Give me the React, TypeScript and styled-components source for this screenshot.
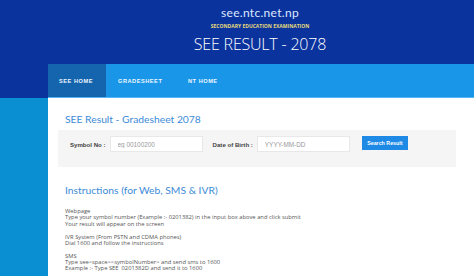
import React from "react";
import styled, { createGlobalStyle } from "styled-components";

const Global = createGlobalStyle`
  html, body { margin: 0; padding: 0; background: #ffffff; }
  body { font-family: "Open Sans", "Liberation Sans", sans-serif; overflow: hidden; }
  * { box-sizing: border-box; }
`;

const Page = styled.div`
  width: 474px;
  height: 276px;
  display: flex;
  flex-direction: column;
  overflow: hidden;
`;

const Header = styled.header`
  background: #0b339e;
  display: flex;
  flex-direction: column;
  align-items: center;
  padding-top: 5px;
`;

const Domain = styled.div`
  color: #dfe8ff;
  font-family: "Lato", "Open Sans", sans-serif;
  font-size: 12px;
  line-height: 15px;
  letter-spacing: 0.3px;
  margin-left: 46px;
`;

const Subtitle = styled.div`
  color: #e6dc7a;
  font-family: "Open Sans", sans-serif;
  font-weight: 700;
  font-size: 5px;
  line-height: 6px;
  margin-top: 3px;
  margin-left: 46px;
  white-space: nowrap;
`;

const Title = styled.h1`
  margin: 4px 0 0 46px;
  color: #ffffff;
  font-family: "Open Sans", sans-serif;
  font-weight: 300;
  font-size: 16px;
  line-height: 22px;
  letter-spacing: -0.2px;
  white-space: nowrap;
`;

const NavRow = styled.nav`
  align-self: stretch;
  margin-top: 9px;
  margin-left: 48px;
  height: 34px;
  background: #1a96e8;
  border-bottom: 1px solid #57b7f4;
  display: flex;
`;

const Tab = styled.a<{ $active?: boolean; $w?: number }>`
  display: flex;
  align-items: center;
  padding: 0 12px 0 ${(p) => (p.$active ? "11px" : "12px")};
  background: ${(p) => (p.$active ? "#1465ad" : "transparent")};
  color: #eef6ff;
  font-family: "Liberation Sans", Arial, sans-serif;
  font-weight: 700;
  font-size: 5.6px;
  letter-spacing: 0.55px;
  text-decoration: none;
  ${(p) => (p.$w ? `width: ${p.$w}px;` : "")}
`;

const Body = styled.div`
  flex: 1;
  display: flex;
`;

const Side = styled.aside`
  width: 48px;
  background: #0a8fd3;
`;

const Content = styled.main`
  flex: 1;
  background: #ffffff;
  padding: 14px 18px 0 10px;
`;

const Heading = styled.h2<{ $gap?: number }>`
  margin: ${(p) => p.$gap ?? 0}px 0 0 7px;
  color: #3d8bd8;
  font-family: "Lato", "Open Sans", sans-serif;
  font-weight: 400;
  font-size: 10.3px;
  line-height: 14px;
  letter-spacing: 0;
  white-space: nowrap;
`;

const FormPanel = styled.form`
  margin-top: 4px;
  height: 37px;
  background: #f5f5f5;
  display: flex;
  align-items: flex-start;
  padding: 6px 12px 0 12px;
`;

const Label = styled.label`
  font-family: "Liberation Sans", Arial, sans-serif;
  font-weight: 700;
  font-size: 6.1px;
  color: #444;
  height: 16px;
  display: flex;
  align-items: center;
  margin-right: 4px;
  white-space: nowrap;
`;

const Input = styled.input`
  width: 93px;
  height: 16px;
  border: 1px solid #e8e8e8;
  background: #ffffff;
  padding: 0 0 0 7px;
  font-family: "Liberation Sans", Arial, sans-serif;
  font-size: 6.4px;
  color: #888;
  margin-right: 10px;
  outline: none;
  &::placeholder { color: #999; }
`;

const Button = styled.button`
  margin-left: 2px;
  width: 46px;
  height: 14px;
  border: none;
  background: #1e8ae6;
  color: #ffffff;
  font-family: "Liberation Sans", Arial, sans-serif;
  font-weight: 700;
  font-size: 5.3px;
  padding: 0;
`;

const Para = styled.p<{ $first?: boolean }>`
  margin: ${(p) => (p.$first ? "11px" : "6.3px")} 0 0 7px;
  font-family: "Open Sans", sans-serif;
  font-size: 5.8px;
  line-height: 6.4px;
  color: #555;
  white-space: nowrap;
`;

export default function App() {
  return (
    <Page>
      <Global />
      <Header>
        <Domain>see.ntc.net.np</Domain>
        <Subtitle>SECONDARY EDUCATION EXAMINATION</Subtitle>
        <Title>SEE RESULT - 2078</Title>
        <NavRow>
          <Tab $active $w={58}>SEE HOME</Tab>
          <Tab $w={70}>GRADESHEET</Tab>
          <Tab>NT HOME</Tab>
        </NavRow>
      </Header>
      <Body>
        <Side />
        <Content>
          <Heading>SEE Result - Gradesheet 2078</Heading>
          <FormPanel onSubmit={(e) => e.preventDefault()}>
            <Label>Symbol No :</Label>
            <Input placeholder="eg 00100200" />
            <Label>Date of Birth :</Label>
            <Input placeholder="YYYY-MM-DD" />
            <Button type="submit">Search Result</Button>
          </FormPanel>
          <Heading $gap={16}>Instructions (for Web, SMS &amp; IVR)</Heading>
          <Para $first>
            Webpage
            <br />
            Type your symbol number (Example :- 0201382) in the input box above and click submit
            <br />
            Your result will appear on the screen
          </Para>
          <Para>
            IVR System (From PSTN and CDMA phones)
            <br />
            Dial 1600 and follow the instructions
          </Para>
          <Para>
            SMS
            <br />
            Type see&lt;space&gt;&lt;symbolNumber&gt; and send sms to 1600
            <br />
            Example :- Type SEE&nbsp; 0201382D and send it to 1600
          </Para>
        </Content>
      </Body>
    </Page>
  );
}
